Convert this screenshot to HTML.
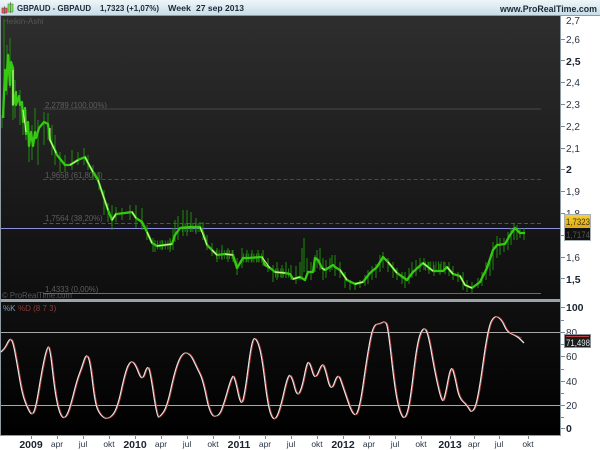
<!DOCTYPE html>
<html>
<head>
<meta charset="utf-8">
<style>
html,body{margin:0;padding:0;background:#fff}
body{width:600px;height:450px;overflow:hidden;position:relative}
svg{position:absolute;left:0;top:0}
text{font-family:"Liberation Sans",sans-serif}
</style>
</head>
<body>
<svg width="600" height="450" viewBox="0 0 600 450" xmlns="http://www.w3.org/2000/svg">
<defs>
<linearGradient id="hd" x1="0" y1="0" x2="0" y2="1"><stop offset="0" stop-color="#eef6f9"/><stop offset="1" stop-color="#c9dde7"/></linearGradient>
<linearGradient id="pc" x1="0" y1="0" x2="0" y2="1"><stop offset="0" stop-color="#2e2e2e"/><stop offset="1" stop-color="#0e0e0e"/></linearGradient>
<linearGradient id="sc" x1="0" y1="0" x2="0" y2="1"><stop offset="0" stop-color="#101010"/><stop offset="1" stop-color="#000"/></linearGradient>
<linearGradient id="gold" x1="0" y1="0" x2="0" y2="1"><stop offset="0" stop-color="#f7d23c"/><stop offset="1" stop-color="#e0a80c"/></linearGradient>
</defs>
<rect width="600" height="450" fill="#fff"/>
<rect width="600" height="15" fill="url(#hd)"/>
<rect y="15" width="600" height="1" fill="#8f9ba2"/>
<rect y="16" width="561" height="283" fill="url(#pc)"/>
<rect y="299" width="561" height="3" fill="#98a2a8"/>
<rect y="302" width="561" height="133" fill="url(#sc)"/>
<rect y="435" width="561" height="1" fill="#8f9ba2"/>
<rect x="0" y="16" width="1" height="420" fill="#8f9ba2"/>
<rect x="560" y="16" width="1" height="420" fill="#8f9ba2"/>

<!-- header icon -->
<rect x="2" y="8" width="5" height="5" fill="#e0605c" stroke="#a03030" stroke-width=".6"/>
<rect x="8" y="4" width="5" height="8" fill="#7fe05a" stroke="#2f9a20" stroke-width=".6"/>
<path d="M10.500 2V13M4.500 6V14" stroke="#555" stroke-width=".6"/>
<g font-size="8.500" font-weight="bold" fill="#1c2a3a">
<text x="17" y="11" textLength="74" lengthAdjust="spacingAndGlyphs">GBPAUD - GBPAUD</text>
<text x="100" y="11" textLength="59" lengthAdjust="spacingAndGlyphs">1,7323 (+1,07%)</text>
<text x="168" y="11" textLength="23" lengthAdjust="spacingAndGlyphs">Week</text>
<text x="196" y="11" textLength="48" lengthAdjust="spacingAndGlyphs">27 sep 2013</text>
<text x="500" y="12" font-size="8.800" textLength="97" lengthAdjust="spacingAndGlyphs">www.ProRealTime.com</text>
</g>

<!-- overlays -->
<text x="3" y="24" font-size="8" fill="#555">Heikin-Ashi</text>
<text x="2" y="298" font-size="8.500" fill="#565656" textLength="70" lengthAdjust="spacingAndGlyphs">© ProRealTime.com</text>
<g font-size="7.800" fill="#5e5e5e">
<text x="45" y="108">2,2789 (100,00%)</text>
<text x="45" y="178">1,9658 (61,80%)</text>
<text x="45" y="221">1,7564 (38,20%)</text>
<text x="45" y="292">1,4333 (0,00%)</text>
</g>
<path d="M43 109H541" stroke="#474747" stroke-width="1"/>
<path d="M43 179.500H541" stroke="#b01c1c" stroke-width="1" stroke-dasharray="4 2.500"/>
<path d="M43 223.500H541" stroke="#1a7a1a" stroke-width="1" stroke-dasharray="4 2.500"/>
<path d="M43 293.500H541" stroke="#6a6a6a" stroke-width="1"/>
<path d="M1 228.500H560" stroke="#8d90e0" stroke-width="1"/>

<!-- wicks -->
<path fill="none" stroke="#25960c" stroke-dasharray="1 1.600" opacity=".8" stroke-width="9" d="M157 245H172M182 227.500H200M216 254.500H233M243 258H262M275 273H291M425 266H445"/>
<path fill="none" stroke="#1f8a0c" stroke-width="1" d="M2 115V128M4 20V118M7 45V95M10 38V88M13 75V120M15 80V118M20 90V125M23 108V135M26 110V140M29 130V162M32 125V160M35 108V140M38 120V165M44 112V145M48 113V140M52 125V155M55 135V165M60 152V172M65 155V172M72 150V170M78 152V165M84 148V165M88 155V170M93 165V180M99 172V190M104 190V215M108 203V222M112 205V230M116 207V222M122 208V220M130 205V220M136 205V228M142 208V230M147 225V240M153 238V252M155 240V252M162 240V250M170 238V252M173 228V250M175 220V242M178 216V240M183 210V236M187 210V236M191 212V232M196 218V234M200 222V232M203 222V240M207 235V250M212 243V256M217 248V262M222 245V260M228 248V262M233 250V262M237 258V275M242 248V268M247 250V262M252 250V262M258 250V262M263 250V266M268 258V272M273 265V282M277 262V280M282 265V278M286 262V278M291 265V280M296 266V284M300 262V280M302 248V278M304 238V272M307 258V276M311 262V280M315 255V272M317 250V268M320 248V270M323 258V280M326 260V278M330 258V272M332 255V270M335 255V276M340 262V278M345 272V288M350 280V290M355 282V290M360 280V288M365 275V286M368 270V284M372 266V280M376 264V278M380 255V272M383 252V268M388 258V272M393 262V278M397 268V280M402 272V284M405 272V288M409 268V284M412 262V278M416 260V276M420 258V272M424 258V270M429 262V274M434 265V276M440 264V275M445 262V274M449 262V276M453 266V280M458 272V282M463 272V290M467 280V292M472 282V294M478 278V288M482 272V286M486 262V280M490 258V276M493 242V270M497 236V258M500 238V255M504 238V252M508 232V250M511 228V245M514 224V240M517 225V240M520 228V238M524 228V240"/>
<!-- body -->
<path fill="none" stroke="#35c912" stroke-width="2.300" stroke-linejoin="round" d="M3 118L5 70L6 90L8 55L10 85L11 62L13 68L13 105L16 92L16 105L19 96L20 105L22 102L23 122L25 108L26 134L28 122L29 146L31 132L33 146L35 132L36 138L39 128L44 122L48 124L50 140L55 150L57 155L65 165L70 165L78 160L85 157L88 163L93 172L98 180L103 195L108 210L112 220L116 214L125 213L132 212L136 218L142 222L147 232L152 243L157 246L165 245L172 244L175 235L180 228L190 227L200 227L203 233L207 245L212 250L217 255L225 254L233 255L237 268L243 258L248 258L262 257L265 265L270 268L275 272L285 273L290 274L293 279L300 277L305 280L308 272L313 272L315 258L318 260L322 268L325 270L333 265L335 267L340 270L347 280L355 284L363 282L370 273L377 267L383 257L388 262L397 273L407 280L413 272L423 263L433 271L443 271L447 267L453 274L460 276L465 285L472 288L480 282L487 268L493 250L497 245L505 244L510 235L515 228L520 233L525 233"/>
<path fill="none" stroke="#dcfb9e" stroke-width="1" stroke-linejoin="round" d="M13 70L13 105M23 110L26 132M50 128L50 140L56 153M70 165L78 160M85 157L93 172M98 180L108 210M112 220L116 214M132 212L136 218M147 232L152 243M157 246L172 244M200 227L207 245M212 250L217 255M225 254L233 255M262 257L270 268M275 272L285 273M293 279L300 277M322 268L325 270M340 270L347 280M355 284L363 282M388 262L397 273M423 263L433 271M447 267L453 274M460 276L465 285L472 288"/>

<!-- stochastic levels -->
<path d="M1 332.500H560M1 405.500H560" stroke="#a8a8a8" stroke-width="1"/>
<text x="3" y="311" font-size="8" fill="#7f9ab8">%K</text>
<text x="18" y="311" font-size="8" fill="#8a3a3a">%D (8 7 3)</text>
<path id="k" fill="none" stroke="#e9e9e9" stroke-width="1.300" stroke-linejoin="round" d="M1 352L3 350Q5 348 7.500 343Q10 338 11.500 340Q13 342 15 352.500Q17 363 19.500 378Q22 393 24.500 400Q27 407 29.500 411.500Q32 416 34 411.500Q36 407 39 388.500Q42 370 44.500 358.500Q47 347 48.500 347Q50 347 52.500 370Q55 393 57.500 404Q60 415 62.500 417Q65 419 67.500 413.500Q70 408 73.500 394Q77 380 79.500 373.500Q82 367 84 360.500Q86 354 88 357Q90 360 92.500 381.500Q95 403 97.500 409Q100 415 104 417.500Q108 420 112.500 415Q117 410 121 391.500Q125 373 127.500 367Q130 361 132.500 362Q135 363 138.500 372.500Q142 382 144.500 374Q147 366 148.500 368Q150 370 153.500 393.500Q157 417 158.500 417Q160 417 163.500 412Q167 407 171 388.500Q175 370 178.500 361.500Q182 353 186 353Q190 353 193.500 360.500Q197 368 200 374Q203 380 206.500 397.500Q210 415 214 416Q218 417 220.500 412Q223 407 227.500 391Q232 375 233.500 376.500Q235 378 238 392.500Q241 407 243 400Q245 393 248.500 365.500Q252 338 254.500 338.500Q257 339 259.500 348Q262 357 265 382Q268 407 271 414.500Q274 422 277 416Q280 410 284 392Q288 374 290 375.500Q292 377 294.500 387Q297 397 299.500 392.500Q302 388 304.500 375Q307 362 308.500 362.500Q310 363 312.500 372Q315 381 318.500 372Q322 363 323.500 365.500Q325 368 328 380.500Q331 393 334.500 382.500Q338 372 340.500 379.500Q343 387 348.500 403Q354 419 357 413Q360 407 363.500 382Q367 357 370 341Q373 325 376.500 324.500Q380 324 382.500 322.500Q385 321 386.500 324Q388 327 391.500 358.500Q395 390 397.500 401.500Q400 413 402.500 416.500Q405 420 407.500 411.500Q410 403 413.500 373Q417 343 420 335Q423 327 425.500 329.500Q428 332 431.500 352.500Q435 373 438.500 388Q442 403 443.500 400Q445 397 448 380.500Q451 364 453 370.500Q455 377 457 387.500Q459 398 463 401.500Q467 405 469.500 409.500Q472 414 475 407Q478 400 483 363.500Q488 327 491.500 321Q495 315 498.500 317.500Q502 320 504.500 326Q507 332 512 334Q517 336 520.500 339.500L524 343"/>
<path transform="translate(1,0)" fill="none" stroke="#b8423f" stroke-width=".8" stroke-linejoin="round" d="M1 352L3 350Q5 348 7.500 343Q10 338 11.500 340Q13 342 15 352.500Q17 363 19.500 378Q22 393 24.500 400Q27 407 29.500 411.500Q32 416 34 411.500Q36 407 39 388.500Q42 370 44.500 358.500Q47 347 48.500 347Q50 347 52.500 370Q55 393 57.500 404Q60 415 62.500 417Q65 419 67.500 413.500Q70 408 73.500 394Q77 380 79.500 373.500Q82 367 84 360.500Q86 354 88 357Q90 360 92.500 381.500Q95 403 97.500 409Q100 415 104 417.500Q108 420 112.500 415Q117 410 121 391.500Q125 373 127.500 367Q130 361 132.500 362Q135 363 138.500 372.500Q142 382 144.500 374Q147 366 148.500 368Q150 370 153.500 393.500Q157 417 158.500 417Q160 417 163.500 412Q167 407 171 388.500Q175 370 178.500 361.500Q182 353 186 353Q190 353 193.500 360.500Q197 368 200 374Q203 380 206.500 397.500Q210 415 214 416Q218 417 220.500 412Q223 407 227.500 391Q232 375 233.500 376.500Q235 378 238 392.500Q241 407 243 400Q245 393 248.500 365.500Q252 338 254.500 338.500Q257 339 259.500 348Q262 357 265 382Q268 407 271 414.500Q274 422 277 416Q280 410 284 392Q288 374 290 375.500Q292 377 294.500 387Q297 397 299.500 392.500Q302 388 304.500 375Q307 362 308.500 362.500Q310 363 312.500 372Q315 381 318.500 372Q322 363 323.500 365.500Q325 368 328 380.500Q331 393 334.500 382.500Q338 372 340.500 379.500Q343 387 348.500 403Q354 419 357 413Q360 407 363.500 382Q367 357 370 341Q373 325 376.500 324.500Q380 324 382.500 322.500Q385 321 386.500 324Q388 327 391.500 358.500Q395 390 397.500 401.500Q400 413 402.500 416.500Q405 420 407.500 411.500Q410 403 413.500 373Q417 343 420 335Q423 327 425.500 329.500Q428 332 431.500 352.500Q435 373 438.500 388Q442 403 443.500 400Q445 397 448 380.500Q451 364 453 370.500Q455 377 457 387.500Q459 398 463 401.500Q467 405 469.500 409.500Q472 414 475 407Q478 400 483 363.500Q488 327 491.500 321Q495 315 498.500 317.500Q502 320 504.500 326Q507 332 512 334Q517 336 520.500 338"/>

<!-- right axis ticks -->
<path stroke="#7d8a92" stroke-width="1" d="M561 39.500h4M561 60.500h4M561 82.500h4M561 104.500h4M561 126.500h4M561 148.500h4M561 169.500h4M561 191.500h4M561 213.500h4M561 235.500h4M561 257.500h4M561 278.500h4M561 307.500h4M561 320.500h3M561 332.500h4M561 344.500h3M561 356.500h4M561 369.500h3M561 381.500h4M561 393.500h3M561 405.500h4M561 417.500h3M561 428.500h4"/>
<g font-size="10" fill="#2b3644">
<text x="566" y="24">2,7</text>
<text x="566" y="43">2,6</text>
<text x="566" y="65" font-weight="bold" fill="#1c2430" font-size="10.500">2,5</text>
<text x="566" y="86">2,4</text>
<text x="566" y="108">2,3</text>
<text x="566" y="130">2,2</text>
<text x="566" y="152">2,1</text>
<text x="566" y="173" font-weight="bold" fill="#1c2430" font-size="10.500">2</text>
<text x="566" y="195">1,9</text>
<text x="566" y="217">1,8</text>
<text x="566" y="239">1,7</text>
<text x="566" y="261">1,6</text>
<text x="566" y="283" font-weight="bold" fill="#1c2430" font-size="10.500">1,5</text>
<text x="566" y="311" font-weight="bold" fill="#1c2430" font-size="10.500">100</text>
<text x="566" y="336">80</text>
<text x="566" y="360">60</text>
<text x="566" y="385">40</text>
<text x="566" y="409">20</text>
<text x="566" y="432" font-weight="bold" fill="#1c2430" font-size="10.500">0</text>
</g>

<!-- price tags -->
<rect x="564.500" y="214.500" width="26" height="13" fill="url(#gold)" stroke="#a9b0b4"/>
<text x="566" y="225" font-size="9.500" fill="#3b3212" textLength="24" lengthAdjust="spacingAndGlyphs">1,7323</text>
<rect x="564.500" y="227.500" width="26" height="13" fill="#111" stroke="#a9b0b4"/>
<text x="566" y="238" font-size="9.500" fill="#555" textLength="24" lengthAdjust="spacingAndGlyphs">1,7174</text>
<rect x="564.500" y="334.500" width="26" height="13" fill="#1a1a1a" stroke="#8a9298"/>
<rect x="566" y="336" width="23" height="1" fill="#b8423f"/>
<text x="566" y="346" font-size="9.500" fill="#e0e6ea" textLength="24" lengthAdjust="spacingAndGlyphs">71,498</text>

<!-- bottom axis -->
<path stroke="#7d8a92" stroke-width="1" d="M31.500 436v3M57.500 436v3M83.500 436v3M109.500 436v3M135.500 436v3M161.500 436v3M187.500 436v3M213.500 436v3M239.500 436v3M265.500 436v3M291.500 436v3M317.500 436v3M343.500 436v3M369.500 436v3M395.500 436v3M421.500 436v3M450.500 436v3M474.500 436v3M499.500 436v3M528.500 436v3"/>
<g font-size="8.500" fill="#2b3644" text-anchor="middle">
<text x="31" y="448" font-size="10.500" font-weight="bold" fill="#1c2430">2009</text>
<text x="57" y="447">apr</text>
<text x="83" y="447">jul</text>
<text x="109" y="447">okt</text>
<text x="135" y="448" font-size="10.500" font-weight="bold" fill="#1c2430">2010</text>
<text x="161" y="447">apr</text>
<text x="187" y="447">jul</text>
<text x="213" y="447">okt</text>
<text x="239" y="448" font-size="10.500" font-weight="bold" fill="#1c2430">2011</text>
<text x="265" y="447">apr</text>
<text x="291" y="447">jul</text>
<text x="317" y="447">okt</text>
<text x="343" y="448" font-size="10.500" font-weight="bold" fill="#1c2430">2012</text>
<text x="369" y="447">apr</text>
<text x="395" y="447">jul</text>
<text x="421" y="447">okt</text>
<text x="450" y="448" font-size="10.500" font-weight="bold" fill="#1c2430">2013</text>
<text x="474" y="447">apr</text>
<text x="499" y="447">jul</text>
<text x="528" y="447">okt</text>
</g>
</svg>
</body>
</html>
